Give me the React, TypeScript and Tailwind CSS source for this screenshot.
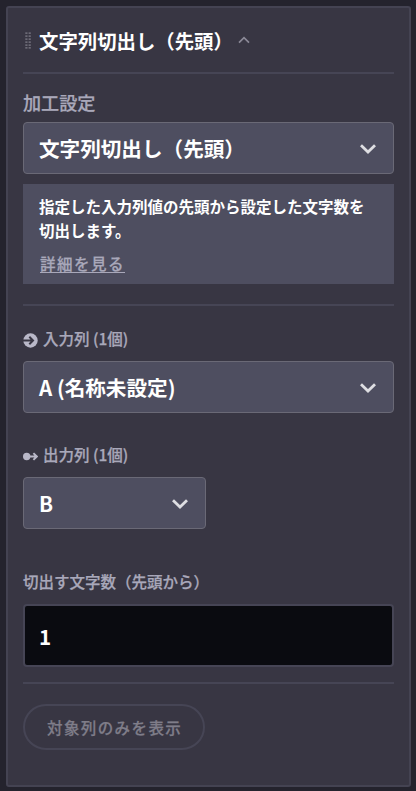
import type { ReactNode } from 'react';
import clsx from 'clsx';

function ChevronDown() {
  return (
    <svg className="mt-0.5" width="18" height="12" viewBox="0 0 18 12" fill="none" aria-hidden="true">
      <path d="M2 2.3 9 9.1l7-6.8" stroke="#dedee2" strokeWidth="2.8" />
    </svg>
  );
}

function DragHandle() {
  return (
    <svg width="7" height="17" viewBox="0 0 7 17" fill="#6c6a76" aria-hidden="true">
      {[0.3, 3.3, 6.3, 9.3, 12.3, 15].map(y => (
        <g key={y}>
          <rect x="0.3" y={y} width="2.2" height="1.7" />
          <rect x="3.6" y={y} width="2.2" height="1.7" />
        </g>
      ))}
    </svg>
  );
}

function InputIcon() {
  return (
    <svg width="15" height="15" viewBox="0 0 15 15" fill="none" aria-hidden="true">
      <circle cx="7.5" cy="7.5" r="7.2" fill="#b9b8c8" />
      <path d="M6.3 3.8 10 7.5l-3.7 3.7M0 7.5h9.6" stroke="#383643" strokeWidth="2" />
    </svg>
  );
}

function OutputIcon() {
  return (
    <svg width="15" height="9" viewBox="0 0 15 9" fill="none" aria-hidden="true">
      <circle cx="3.7" cy="4.5" r="3.7" fill="#b9b8c8" />
      <path d="M6 4.5h8M10.4 1.1l3.4 3.4-3.4 3.4" stroke="#b9b8c8" strokeWidth="1.9" />
    </svg>
  );
}

function SelectBox({ value, className }: { value: string; className?: string }) {
  return (
    <button
      type="button"
      className={clsx(
        'flex h-[52px] shrink-0 items-center justify-between rounded-[4px] border border-[#6a6976] bg-[#4e4e60] pr-4 pl-[15px]',
        className
      )}
    >
      <span className="text-[20.6px] leading-[30px] font-bold whitespace-nowrap text-white">{value}</span>
      <ChevronDown />
    </button>
  );
}

function ColumnLabel({ icon, children }: { icon: ReactNode; children: ReactNode }) {
  return (
    <div className="flex h-6 items-center gap-[5px] text-[15.5px] leading-6 font-medium text-[#a9a8ba] [-webkit-text-stroke:0.25px_#a9a8ba]">
      <span className="mt-[5px]">{icon}</span>
      <span>{children}</span>
    </div>
  );
}

function Divider({ className }: { className?: string }) {
  return <div className={clsx('h-0.5 shrink-0 bg-[#464555]', className)} />;
}

export default function App() {
  return (
    <div className="h-[791px] w-[416px] bg-[#24232d] pt-1.5 pl-1.5 font-['Noto_Sans_CJK_JP',sans-serif]">
      <section className="flex h-[781px] w-[405px] flex-col rounded-[3px] border-2 border-[#444352] bg-[#383643] px-[15px]">
        <header className="mt-[18px] flex h-[30px] shrink-0 items-center">
          <span className="ml-0.5 -mt-0.5">
            <DragHandle />
          </span>
          <h2 className="ml-[7px] w-[195px] text-[19.4px] leading-[30px] font-bold whitespace-nowrap text-white">
            文字列切出し（先頭）
          </h2>
          <svg className="ml-1 -mt-0.5" width="12" height="8" viewBox="0 0 12 8" fill="none" aria-hidden="true">
            <path d="m1 6.7 5-5 5 5" stroke="#8b8997" strokeWidth="1.7" />
          </svg>
        </header>

        <Divider className="mt-4" />

        <div className="mt-[15px] h-[26px] text-[18.1px] leading-[26px] font-medium text-[#a9a8ba] [-webkit-text-stroke:0.25px_#a9a8ba]">
          加工設定
        </div>
        <SelectBox value="文字列切出し（先頭）" className="mt-[7px] w-full" />
        <div className="mt-2.5 h-[100px] shrink-0 bg-[#4e4e60] pt-[11px] pl-4">
          <p className="text-[15.5px] leading-[23.5px] font-bold whitespace-nowrap text-white">
            指定した入力列値の先頭から設定した文字数を
            <br />
            切出します。
          </p>
          <a
            href="#"
            className="mt-[9px] ml-px inline-block text-[15.5px] leading-6 font-medium tracking-[1.5px] text-[#a9a8ba] underline underline-offset-2 [-webkit-text-stroke:0.25px_#a9a8ba]"
          >
            詳細を見る
          </a>
        </div>

        <Divider className="mt-5" />

        <div className="mt-5">
          <ColumnLabel icon={<InputIcon />}>入力列 (1個)</ColumnLabel>
        </div>
        <SelectBox value="A (名称未設定)" className="mt-[11px] w-full" />

        <div className="mt-[29px]">
          <ColumnLabel icon={<OutputIcon />}>出力列 (1個)</ColumnLabel>
        </div>
        <SelectBox value="B" className="mt-[11px] w-[183px]" />

        <div className="mt-10 h-6 text-[15.5px] leading-6 font-medium whitespace-nowrap text-[#a9a8ba] [-webkit-text-stroke:0.25px_#a9a8ba]">
          切出す文字数（先頭から）
        </div>
        <input
          type="text"
          defaultValue="1"
          className="mt-[11px] h-[63px] w-full shrink-0 rounded-[4px] border-2 border-[#464555] bg-[#0a0b10] px-[14px] text-[20.6px] leading-[30px] font-bold text-white outline-none"
        />

        <Divider className="mt-[15px]" />

        <button
          type="button"
          className="mt-5 flex h-[46px] w-[182px] shrink-0 items-center rounded-full border-2 border-[#464555] pl-[22px] text-[15.5px] leading-6 font-medium tracking-[1.4px] whitespace-nowrap text-[#7f7d89] [-webkit-text-stroke:0.25px_#7f7d89]"
        >
          対象列のみを表示
        </button>
      </section>
    </div>
  );
}
